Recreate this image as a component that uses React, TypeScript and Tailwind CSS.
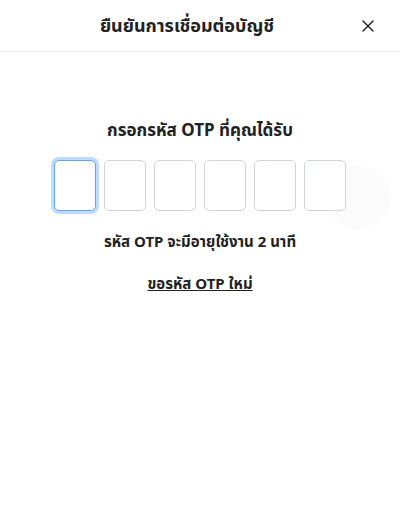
import { X } from "lucide-react";

export default function App() {
  const boxes = [0, 1, 2, 3, 4, 5];
  return (
    <div
      className="relative w-[400px] h-[520px] bg-white text-[#222] overflow-hidden"
      style={{ fontFamily: '"Noto Sans", "Noto Sans Thai", "DejaVu Sans", sans-serif' }}
    >
      <div className="absolute left-[327px] top-[166px] w-[63px] h-[63px] rounded-full bg-[#fbfbfb]" />

      <div className="relative h-[52px] border-b border-[#e5e7eb] flex items-center justify-center pr-[26px]">
        <h1 className="text-[18px] font-bold">ยืนยันการเชื่อมต่อบัญชี</h1>
        <button className="absolute right-[22px] top-[16px] text-[#222]">
          <X size={20} strokeWidth={1.75} />
        </button>
      </div>

      <div className="relative flex flex-col items-center pt-[65px]">
        <h2 className="text-[17px] font-bold">กรอกรหัส OTP ที่คุณได้รับ</h2>
        <div className="flex gap-[8px] mt-[17px]">
          {boxes.map((i) => (
            <div
              key={i}
              className={
                i === 0
                  ? "w-[42px] h-[51px] rounded-[5px] bg-white border border-[#60a5fa] ring-[3px] ring-[#bfdbfe]"
                  : "w-[42px] h-[51px] rounded-[5px] bg-white border-[1.5px] border-[#d1d5db]"
              }
            />
          ))}
        </div>
        <p className="text-[15px] font-bold mt-[19px]">รหัส OTP จะมีอายุใช้งาน 2 นาที</p>
        <a className="text-[15px] font-bold underline mt-[20px]" href="#">
          ขอรหัส OTP ใหม่
        </a>
      </div>
    </div>
  );
}
